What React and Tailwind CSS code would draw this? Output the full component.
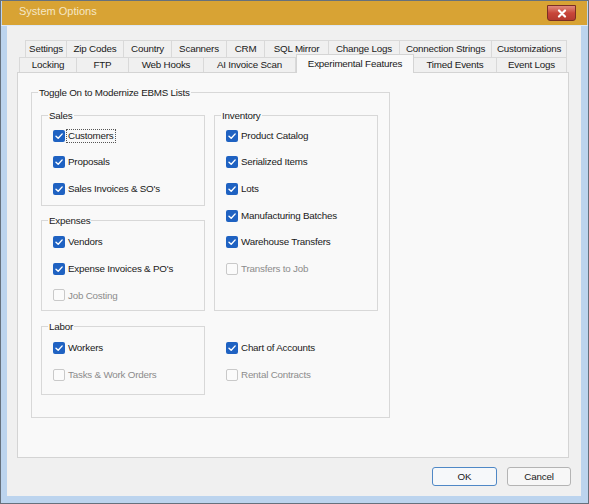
import { useState } from 'react'

const FONT = "font-['Liberation_Sans',Arial,sans-serif]"

const row1 = [
  ['Settings', 'w-[42px]'],
  ['Zip Codes', 'w-[57px]'],
  ['Country', 'w-[48px]'],
  ['Scanners', 'w-[55px]'],
  ['CRM', 'w-[38px]'],
  ['SQL Mirror', 'w-[64px]'],
  ['Change Logs', 'w-[71px]'],
  ['Connection Strings', 'w-[92px]'],
  ['Customizations', 'w-[75px]'],
]

const row2 = [
  ['Locking', 'w-[58px]'],
  ['FTP', 'w-[52px]'],
  ['Web Hooks', 'w-[75px]'],
  ['AI Invoice Scan', 'w-[92px]'],
  ['Experimental Features', 'w-[118px]'],
  ['Timed Events', 'w-[83px]'],
  ['Event Logs', 'w-[70px]'],
]

function Tab({ label, width, first, selected }) {
  if (selected) {
    return (
      <div className={`${width} h-[19px] -mt-[3px] -mb-px relative z-10 flex items-center justify-center whitespace-nowrap border border-b-0 border-[#d4d4d4] bg-[#f9f9f9] text-[#1a1a1a]`}>
        {label}
      </div>
    )
  }
  return (
    <div className={`${width} h-full flex items-center justify-center whitespace-nowrap border-t border-r ${first ? 'border-l' : ''} border-[#d9d9d9] bg-[#f0f0f0] text-[#1a1a1a]`}>
      {label}
    </div>
  )
}

function Check({ label, checked, disabled, focus }) {
  return (
    <div className="h-[26.6px] flex items-center gap-[3px] whitespace-nowrap">
      {checked ? (
        <span className="w-[12px] h-[12px] rounded-[2px] bg-[#1f62c2] flex items-center justify-center">
          <svg width="10" height="10" viewBox="0 0 10 10">
            <path d="M2 5.2 L4.2 7.3 L8.2 2.9" fill="none" stroke="#fff" strokeWidth="1.4" strokeLinecap="round" strokeLinejoin="round" />
          </svg>
        </span>
      ) : (
        <span className="w-[12px] h-[12px] rounded-[2px] border border-[#c9c9c9] bg-[#fbfbfb]" />
      )}
      <span className={`${disabled ? 'text-[#8c8c8c]' : 'text-[#1a1a1a]'} ${focus ? 'outline outline-1 outline-dotted outline-[#555] outline-offset-1' : ''}`}>
        {label}
      </span>
    </div>
  )
}

function Group({ title, className, children }) {
  return (
    <div className={`relative border border-[#d8d8d8] pl-[11px] ${className}`}>
      {title && (
        <span className="absolute -top-[6px] left-[6px] bg-[#f9f9f9] px-[1px] leading-[11px] text-[#1a1a1a]">{title}</span>
      )}
      {children}
    </div>
  )
}

export default function App() {
  const [tab] = useState('Experimental Features')

  return (
    <div className={`${FONT} text-[9.8px] tracking-[-0.2px] leading-none w-[589px] h-[504px] border border-[#66717d] bg-[#bcd4ee] flex flex-col select-none`}>
      {/* Title bar */}
      <div className="h-[24px] mx-px bg-[#d8a334] flex items-start justify-between">
        <span className="pl-[17px] pt-[5px] text-[11px] tracking-normal text-[#f5e7c6]">System Options</span>
        <button className="mt-[4px] mr-[11px] w-[29px] h-[16px] rounded-b-[3px] border border-[#7b2e24] bg-gradient-to-b from-[#e08a7c] via-[#c8463a] to-[#b53a2f] flex items-center justify-center">
          <svg width="10" height="9" viewBox="0 0 10 9">
            <path d="M2 1.5 L8 7.5 M8 1.5 L2 7.5" stroke="#fff" strokeWidth="2.2" strokeLinecap="round" />
          </svg>
        </button>
      </div>
      <div className="h-px bg-[#dde8f5]" />

      {/* Client area */}
      <div className="mx-[6px] mr-[7px] h-[470px] bg-[#f0f0f0] flex flex-col pt-[14px]">
        <div className="flex h-[17px] ml-[18px]">
          {row1.map(([l, w], i) => (
            <Tab key={l} label={l} width={w} first={i === 0} />
          ))}
        </div>
        <div className="flex h-[15px] ml-[12px] items-end">
          {row2.map(([l, w], i) => (
            <Tab key={l} label={l} width={w} first={i === 0} selected={l === tab} />
          ))}
        </div>

        {/* Tab page */}
        <div className="ml-[10px] w-[552px] h-[386px] border border-[#d4d4d4] bg-[#f9f9f9] pt-[19px] pl-[13px]">
          <div className="relative w-[359px] h-[326px] border border-[#d8d8d8] pl-[9px] pt-[22px]">
            <span className="absolute -top-[6px] left-[6px] bg-[#f9f9f9] px-[1px] leading-[11px] text-[#1a1a1a]">
              Toggle On to Modernize EBMS Lists
            </span>
            <div className="flex gap-[9px]">
              <div className="w-[164px] flex flex-col gap-[14px]">
                <Group title="Sales" className="h-[91px] pt-[6.5px]">
                  <Check label="Customers" checked focus />
                  <Check label="Proposals" checked />
                  <Check label="Sales Invoices & SO's" checked />
                </Group>
                <Group title="Expenses" className="h-[91px] mb-px pt-[8px]">
                  <Check label="Vendors" checked />
                  <Check label="Expense Invoices & PO's" checked />
                  <Check label="Job Costing" disabled />
                </Group>
                <Group title="Labor" className="h-[69px] pt-[8px]">
                  <Check label="Workers" checked />
                  <Check label="Tasks & Work Orders" disabled />
                </Group>
              </div>
              <div className="w-[164px] flex flex-col gap-[15px]">
                <Group title="Inventory" className="h-[196px] pt-[6.5px]">
                  <Check label="Product Catalog" checked />
                  <Check label="Serialized Items" checked />
                  <Check label="Lots" checked />
                  <Check label="Manufacturing Batches" checked />
                  <Check label="Warehouse Transfers" checked />
                  <Check label="Transfers to Job" disabled />
                </Group>
                <div className="h-[69px] border border-transparent pl-[11px] pt-[8px]">
                  <Check label="Chart of Accounts" checked />
                  <Check label="Rental Contracts" disabled />
                </div>
              </div>
            </div>
          </div>
        </div>

        {/* Buttons */}
        <div className="flex justify-end gap-[10px] pr-[10px] mt-[9px]">
          <button className="w-[65px] h-[19px] rounded-[3px] border border-[#4f88c6] bg-[#f6f8fa] text-[#1a1a1a]">OK</button>
          <button className="w-[64px] h-[19px] rounded-[3px] border border-[#b4b4b4] bg-[#f7f7f7] text-[#1a1a1a]">Cancel</button>
        </div>
      </div>
    </div>
  )
}
